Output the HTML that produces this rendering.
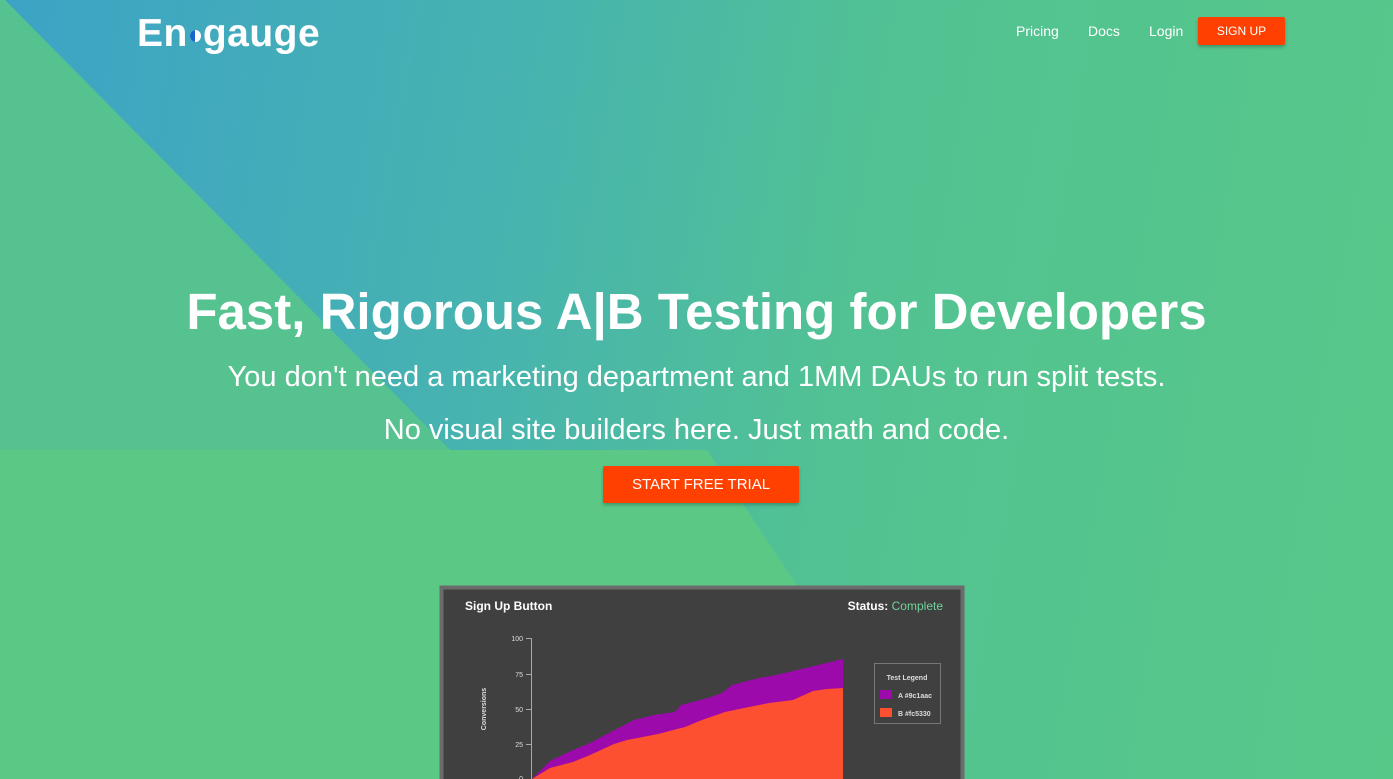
<!DOCTYPE html>
<html><head><meta charset="utf-8"><style>
html,body{margin:0;padding:0;width:1393px;height:779px;overflow:hidden;font-family:"Liberation Sans",sans-serif;}
body{position:relative;background:linear-gradient(100deg,#3da3c6 0%,#47b3b0 35%,#52c292 60%,#58c889 100%);}
.bg{position:absolute;left:0;top:0}
.logo{position:absolute;left:137px;top:12px;color:#fff;font-size:39px;font-weight:bold;letter-spacing:0.5px}
.nav{position:absolute;top:23px;color:#fff;font-size:14px}
.btn{position:absolute;background:#ff4000;color:#fff;text-align:center;border-radius:2px;box-shadow:0 2px 3px rgba(0,0,0,.25)}
h1{position:absolute;left:0;width:1393px;top:282px;margin:0;text-align:center;color:#fff;font-size:51px;font-weight:bold}
.sub{position:absolute;left:0;width:1393px;text-align:center;color:#fff;font-size:29px}
</style></head><body>
<svg class="bg" width="1393" height="779">
<polygon points="5,0 450,450 0,450 0,0" fill="#55c28f"/>
<polygon points="0,450 707,450 797,585 797,779 0,779" fill="#5bc886"/>
</svg>
<div class="logo">En<span style="display:inline-block;width:11px;height:12px;border-radius:50%;background:#fff;position:relative;top:-4px;margin:0 2px;overflow:hidden"><span style="position:absolute;left:0;top:0;width:5px;height:12px;background:#1767c9;border-radius:6px 0 0 6px"></span></span>gauge</div>
<div class="nav" style="left:1016px">Pricing</div>
<div class="nav" style="left:1088px">Docs</div>
<div class="nav" style="left:1149px">Login</div>
<div class="btn" style="left:1198px;top:17px;width:87px;height:28px;line-height:28px;font-size:12px">SIGN UP</div>
<h1>Fast, Rigorous A|B Testing for Developers</h1>
<div class="sub" style="top:361px">You don't need a marketing department and 1MM DAUs to run split tests.</div>
<div class="sub" style="top:414px">No visual site builders here. Just math and code.</div>
<div class="btn" style="left:603px;top:466px;width:196px;height:37px;line-height:37px;font-size:15px">START FREE TRIAL</div>
<svg style="position:absolute;left:0;top:0" width="1393" height="779">
<rect x="441.5" y="587.5" width="521" height="200" fill="#404040" stroke="#6b6b6b" stroke-width="4"/>
<text x="465" y="610" fill="#fff" font-size="12" font-weight="bold" font-family="Liberation Sans">Sign Up Button</text>
<text x="943" y="610" fill="#fff" font-size="12" font-weight="bold" text-anchor="end" font-family="Liberation Sans">Status: <tspan fill="#6fd39a" font-weight="normal">Complete</tspan></text>
<path d="M532,779 L550,761 573,750 590,743 607,734 634,720 654,715 675,712 681,705 708,698 722,693 732,685 759,678 776,675 810,667 843,659 L843,779 Z" fill="#9c0aac"/>
<path d="M532,779 L550,768 573,762 590,755 614,744 627,740 658,734 685,727 702,720 725,712 749,707 769,703 793,700 813,691 827,689 843,688 L843,779 Z" fill="#fc5030"/>
<g stroke="#aaa" stroke-width="1"><line x1="531.5" y1="638" x2="531.5" y2="779"/><line x1="526" y1="638.5" x2="531" y2="638.5"/><line x1="526" y1="674.5" x2="531" y2="674.5"/><line x1="526" y1="709.5" x2="531" y2="709.5"/><line x1="526" y1="744.5" x2="531" y2="744.5"/></g>
<g fill="#ddd" font-size="7" font-family="Liberation Sans" text-anchor="end"><text x="523" y="641">100</text><text x="523" y="677">75</text><text x="523" y="712">50</text><text x="523" y="747">25</text><text x="523" y="781">0</text></g>
<text transform="translate(486,709) rotate(-90)" fill="#ddd" font-size="7" font-weight="bold" text-anchor="middle" font-family="Liberation Sans">Conversions</text>
<rect x="874.5" y="663.5" width="66" height="60" fill="none" stroke="#777"/>
<text x="907" y="680" fill="#ddd" font-size="7" font-weight="bold" text-anchor="middle" font-family="Liberation Sans">Test Legend</text>
<rect x="880" y="690" width="12" height="9" fill="#9c0aac"/><text x="898" y="698" fill="#ddd" font-size="7" font-weight="bold" font-family="Liberation Sans">A #9c1aac</text>
<rect x="880" y="708" width="12" height="9" fill="#fc5030"/><text x="898" y="716" fill="#ddd" font-size="7" font-weight="bold" font-family="Liberation Sans">B #fc5330</text>
</svg>
</body></html>
